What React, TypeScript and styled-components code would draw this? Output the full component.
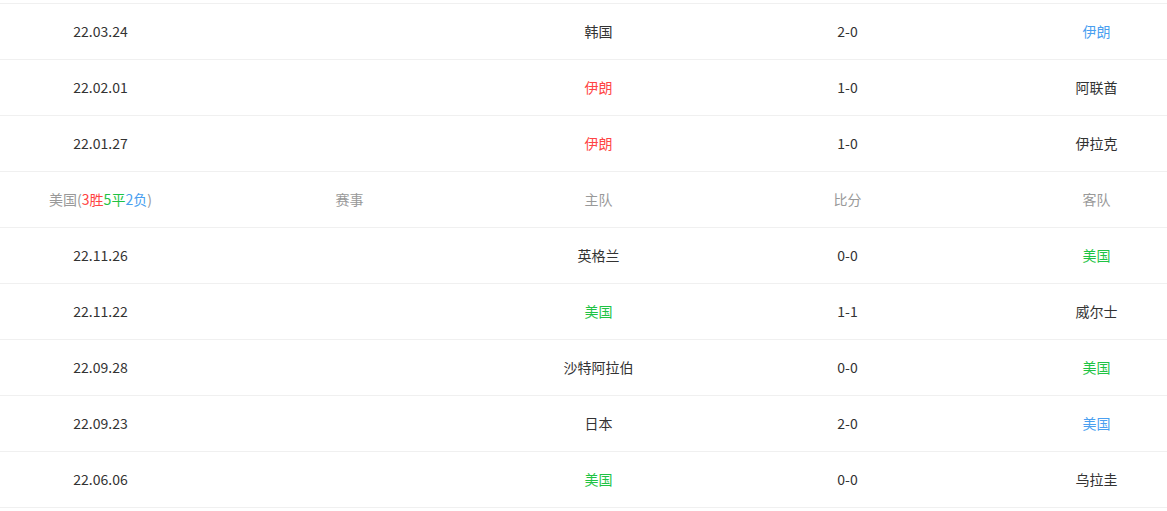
import styled, { createGlobalStyle } from "styled-components";

const Global = createGlobalStyle`
  html, body {
    margin: 0;
    padding: 0;
    background: #fff;
    overflow: hidden;
  }
  body {
    font-family: "Noto Sans CJK SC", "Microsoft YaHei", sans-serif;
    font-size: 14px;
    color: #333;
  }
`;

type Tone = "red" | "green" | "blue" | "dark" | "gray";

const tones: Record<Tone, string> = {
  red: "#ff4444",
  green: "#1ec344",
  blue: "#4a9ff0",
  dark: "#333333",
  gray: "#999999",
};

type Match = {
  date: string;
  event?: string;
  home: string;
  homeTone?: Tone;
  score: string;
  away: string;
  awayTone?: Tone;
};

const iranRows: Match[] = [
  { date: "22.03.24", home: "韩国", score: "2-0", away: "伊朗", awayTone: "blue" },
  { date: "22.02.01", home: "伊朗", homeTone: "red", score: "1-0", away: "阿联酋" },
  { date: "22.01.27", home: "伊朗", homeTone: "red", score: "1-0", away: "伊拉克" },
];

const usaRows: Match[] = [
  { date: "22.11.26", home: "英格兰", score: "0-0", away: "美国", awayTone: "green" },
  { date: "22.11.22", home: "美国", homeTone: "green", score: "1-1", away: "威尔士" },
  { date: "22.09.28", home: "沙特阿拉伯", score: "0-0", away: "美国", awayTone: "green" },
  { date: "22.09.23", home: "日本", score: "2-0", away: "美国", awayTone: "blue" },
  { date: "22.06.06", home: "美国", homeTone: "green", score: "0-0", away: "乌拉圭" },
];

export default function App() {
  return (
    <>
      <Global />
      <Page>
        <Table>
          {iranRows.map((m) => (
            <MatchRow key={m.date} match={m} />
          ))}

          <Row>
            <Cell $tone="gray">
              美国(<Tag $tone="red">3胜</Tag>
              <Tag $tone="green">5平</Tag>
              <Tag $tone="blue">2负</Tag>)
            </Cell>
            <Cell $tone="gray">赛事</Cell>
            <Cell $tone="gray">主队</Cell>
            <Cell $tone="gray">比分</Cell>
            <Cell $tone="gray">客队</Cell>
          </Row>

          {usaRows.map((m) => (
            <MatchRow key={m.date} match={m} />
          ))}
        </Table>
      </Page>
    </>
  );
}

function MatchRow({ match }: { match: Match }) {
  return (
    <Row>
      <Cell>{match.date}</Cell>
      <Cell>{match.event ?? ""}</Cell>
      <Cell $tone={match.homeTone}>{match.home}</Cell>
      <Cell>{match.score}</Cell>
      <Cell $tone={match.awayTone}>{match.away}</Cell>
    </Row>
  );
}

const Page = styled.div`
  width: 1167px;
  padding-top: 3px;
  overflow: hidden;
`;

const Table = styled.div`
  width: 1245px;
  margin-left: -24px;
  border-top: 1px solid #f0f0f0;
`;

const Row = styled.div`
  box-sizing: border-box;
  display: grid;
  grid-template-columns: repeat(5, 249px);
  height: 56px;
  padding-bottom: 2px;
  align-items: center;
  border-bottom: 1px solid #f0f0f0;
`;

const Cell = styled.div<{ $tone?: Tone }>`
  text-align: center;
  line-height: 20px;
  color: ${(p) => tones[p.$tone ?? "dark"]};
`;

const Tag = styled.span<{ $tone: Tone }>`
  color: ${(p) => tones[p.$tone]};
`;
